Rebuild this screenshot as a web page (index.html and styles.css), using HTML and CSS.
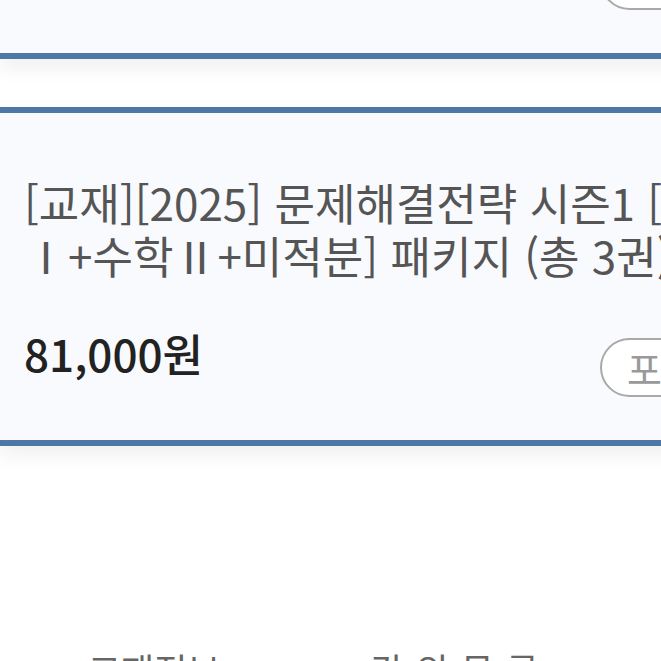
FILE: index.html
```html
<!DOCTYPE html>
<html lang="ko">
<head>
  <meta charset="UTF-8" />
  <meta name="viewport" content="width=device-width, initial-scale=1.0"/>
  <title>교재 목록</title>
  <link rel="stylesheet" href="styles.css">
</head>
<body>
  <div id="list">
    <div class="card">
      <div class="title">[교재][2025] 문제해결전략 시즌1 [수학Ⅰ+수학Ⅱ] 패키지 (총 2권)</div>
      <div class="row">
        <div class="price">54,000원</div>
        <button class="pill">포함도서 보기</button>
      </div>
    </div>

    <div class="card">
      <div class="title">[교재][2025] 문제해결전략 시즌1 [수학Ⅰ+수학Ⅱ+미적분] 패키지 (총 3권)</div>
      <div class="row">
        <div class="price">81,000원</div>
        <button class="pill">포함도서 보기</button>
      </div>
    </div>
  </div>

  <div id="tabs">
    <a class="tab" href="#">교재정보</a>
    <a class="tab wide" href="#">강의목록</a>
  </div>
</body>
</html>
```

FILE: styles.css
```css
body {
  margin: 0;
  background: #fff;
  font-family: 'Noto Sans CJK KR', 'Noto Sans', sans-serif;
  overflow: hidden;
  height: 661px;
}

#list {
  width: 920px;
  margin-top: -280px;
  display: flex;
  flex-direction: column;
  gap: 48px;
}

.card {
  background: #f8fafd;
  border-top: 6px solid #4d78a5;
  border-bottom: 6px solid #4d78a5;
  padding: 63px 27px 43px 24px;
  box-shadow: 0 10px 18px rgba(0, 0, 0, 0.06);
}

.title {
  width: 765px;
  font-size: 44px;
  line-height: 53px;
  color: #555;
}

.row {
  display: flex;
  align-items: flex-start;
  margin-top: 43px;
}

.price {
  font-size: 44px;
  line-height: 56px;
  font-weight: 500;
  color: #222;
}

.pill {
  margin-left: auto;
  margin-top: 13px;
  width: 293px;
  height: 59px;
  border: 2px solid #a9a9a9;
  border-radius: 30px;
  background: #fff;
  font-family: inherit;
  font-size: 38px;
  color: #999;
  text-align: left;
  padding: 0 0 0 25px;
}

#tabs {
  display: flex;
  margin-top: 201px;
  padding-left: 88px;
  gap: 150px;
}

.tab {
  font-size: 36px;
  line-height: 44px;
  color: #666;
  text-decoration: none;
}

.tab.wide {
  letter-spacing: 12px;
}
```
